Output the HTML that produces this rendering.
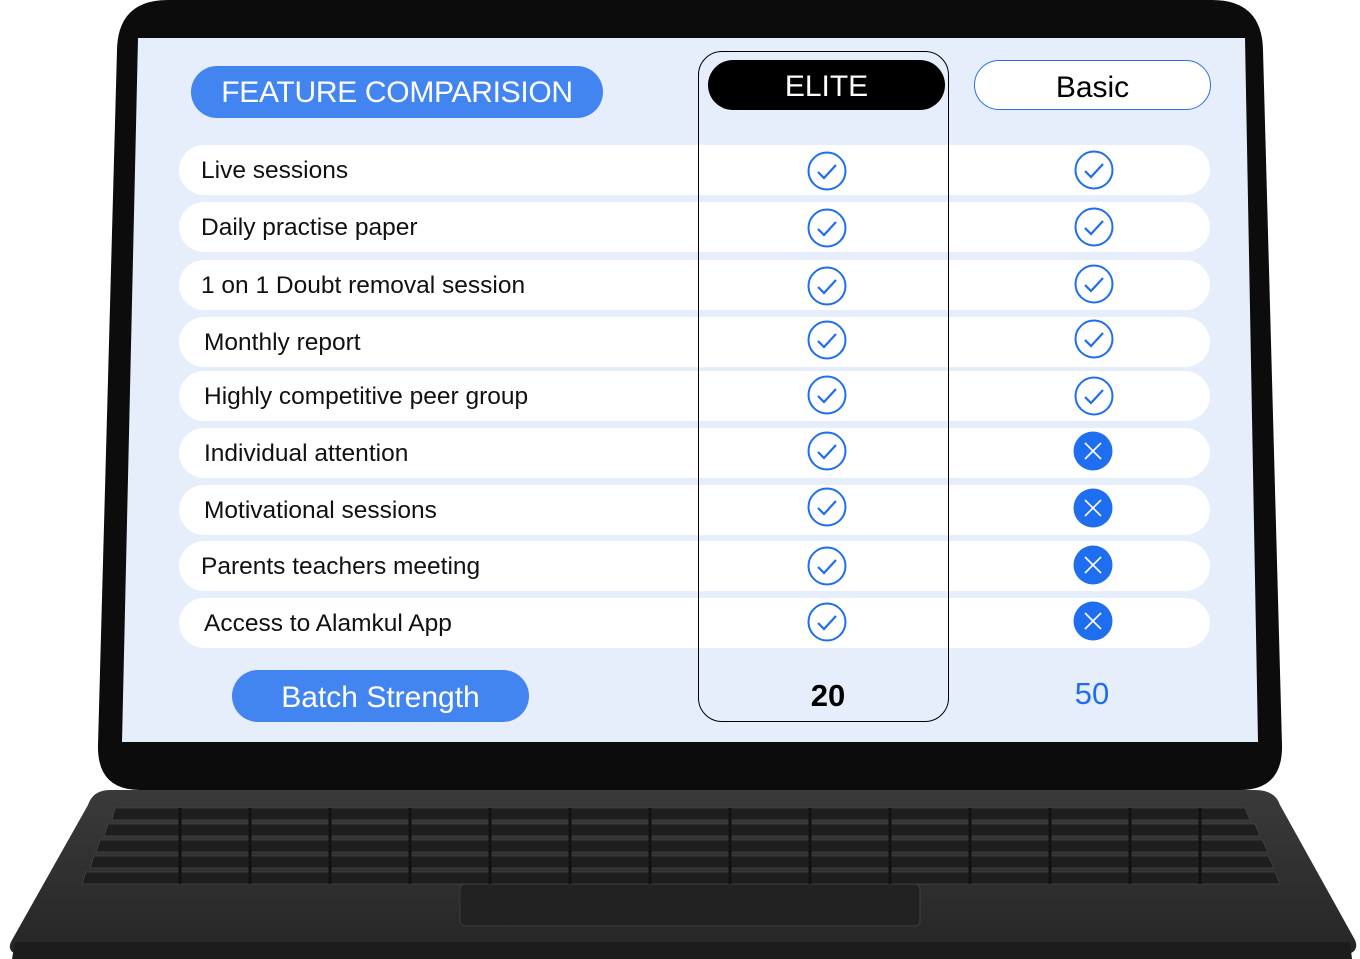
<!DOCTYPE html>
<html><head><style>
body{margin:0;width:1360px;height:959px;background:#fff;position:relative;overflow:hidden;font-family:"Liberation Sans",sans-serif}
.abs{position:absolute}
.row{position:absolute;left:179px;width:1031px;height:50px;background:#fff;border-radius:25px}
.row span{position:absolute;top:12px;font-size:24.5px;color:#111}
</style></head><body>
<svg class="abs" style="left:0;top:760px" width="1360" height="199">
<defs><linearGradient id="kb" x1="0" y1="0" x2="0" y2="1"><stop offset="0" stop-color="#3a3a3a"/><stop offset="1" stop-color="#262626"/></linearGradient></defs>
<path d="M110 30 L1255 30 Q1275 30 1280 45 L1355 180 Q1360 192 1345 195 L20 195 Q5 192 12 180 L88 45 Q93 30 110 30Z" fill="url(#kb)"/>
<path d="M15 182 L1350 182 L1352 199 L12 199Z" fill="#1c1c1c"/>
<rect x="460" y="124" width="460" height="42" rx="5" fill="#222" stroke="#3c3c3c"/>
<g fill="#1e1e1e" stroke="#444" stroke-width="0.8">
<path d="M115 48 L1245 48 L1250 60 L112 60Z"/>
<path d="M108 64 L1255 64 L1260 76 L104 76Z"/>
<path d="M100 80 L1262 80 L1268 92 L96 92Z"/>
<path d="M94 96 L1268 96 L1274 108 L90 108Z"/>
<path d="M86 112 L1275 112 L1280 124 L82 124Z"/>
</g>
<g stroke="#111" stroke-width="3">
<path d="M180 48v76M250 48v76M330 48v76M410 48v76M490 48v76M570 48v76M650 48v76M730 48v76M810 48v76M890 48v76M970 48v76M1050 48v76M1130 48v76M1200 48v76"/>
</g>
</svg>
<svg class="abs" style="left:0;top:0" width="1360" height="800">
<path d="M168 0 L1212 0 Q1262 0 1263 50 L1282 745 Q1283 790 1240 790 L140 790 Q97 790 98 745 L117 50 Q118 0 168 0Z" fill="#0c0c0c"/>
<path d="M138 38 L1245 38 L1258 742 L122 742Z" fill="#e6eefb"/>
</svg>
<div class="abs" style="left:191px;top:66px;width:412px;height:52px;border-radius:26px;background:#4385f0;color:#fff;font-size:30px;line-height:54px;text-align:center;letter-spacing:-0.3px">FEATURE COMPARISION</div>
<div class="row" style="top:145px"><span style="left:22px">Live sessions</span></div>
<div class="row" style="top:202px"><span style="left:22px">Daily practise paper</span></div>
<div class="row" style="top:260px"><span style="left:22px">1 on 1 Doubt removal session</span></div>
<div class="row" style="top:317px"><span style="left:25px">Monthly report</span></div>
<div class="row" style="top:371px"><span style="left:25px">Highly competitive peer group</span></div>
<div class="row" style="top:428px"><span style="left:25px">Individual attention</span></div>
<div class="row" style="top:485px"><span style="left:25px">Motivational sessions</span></div>
<div class="row" style="top:541px"><span style="left:22px">Parents teachers meeting</span></div>
<div class="row" style="top:598px"><span style="left:25px">Access to Alamkul App</span></div>
<div class="abs" style="left:698px;top:51px;width:249px;height:669px;border:1.5px solid #000;border-radius:24px"></div>
<div class="abs" style="left:708px;top:60px;width:237px;height:50px;border-radius:25px;background:#000;color:#fff;font-size:30px;line-height:54px;text-align:center">ELITE</div>
<div class="abs" style="left:974px;top:60px;width:235px;height:48px;border-radius:25px;background:#fff;border:1.5px solid #2a6fe8;color:#000;font-size:30px;line-height:54px;text-align:center">Basic</div>
<div class="abs" style="left:232px;top:670px;width:297px;height:52px;border-radius:26px;background:#4385f0;color:#fff;font-size:30px;line-height:56px;text-align:center">Batch Strength</div>
<div class="abs" style="left:778px;top:678px;width:100px;text-align:center;font-size:31px;font-weight:bold;color:#000">20</div>
<div class="abs" style="left:1042px;top:676px;width:100px;text-align:center;font-size:31px;color:#1f6ef0">50</div>
<svg class="abs" style="left:0;top:0" width="1360" height="700">
<defs>
<g id="ck"><circle r="18.5" fill="none" stroke="#1f6ef0" stroke-width="2"/><path d="M-9 1 L-3 7 L9 -6" fill="none" stroke="#1f6ef0" stroke-width="2.2"/></g>
<g id="x"><circle r="19.5" fill="#1f6ef0"/><path d="M-8 -8 L8 8 M8 -8 L-8 8" stroke="#fff" stroke-width="1.6"/></g>
</defs>
<use href="#ck" x="827" y="171"/><use href="#ck" x="1094" y="170"/>
<use href="#ck" x="827" y="228"/><use href="#ck" x="1094" y="227"/>
<use href="#ck" x="827" y="286"/><use href="#ck" x="1094" y="284"/>
<use href="#ck" x="827" y="340"/><use href="#ck" x="1094" y="339"/>
<use href="#ck" x="827" y="395"/><use href="#ck" x="1094" y="396"/>
<use href="#ck" x="827" y="451"/><use href="#x" x="1093" y="451"/>
<use href="#ck" x="827" y="507"/><use href="#x" x="1093" y="508"/>
<use href="#ck" x="827" y="566"/><use href="#x" x="1093" y="565"/>
<use href="#ck" x="827" y="622"/><use href="#x" x="1093" y="621"/>
</svg>
</body></html>
